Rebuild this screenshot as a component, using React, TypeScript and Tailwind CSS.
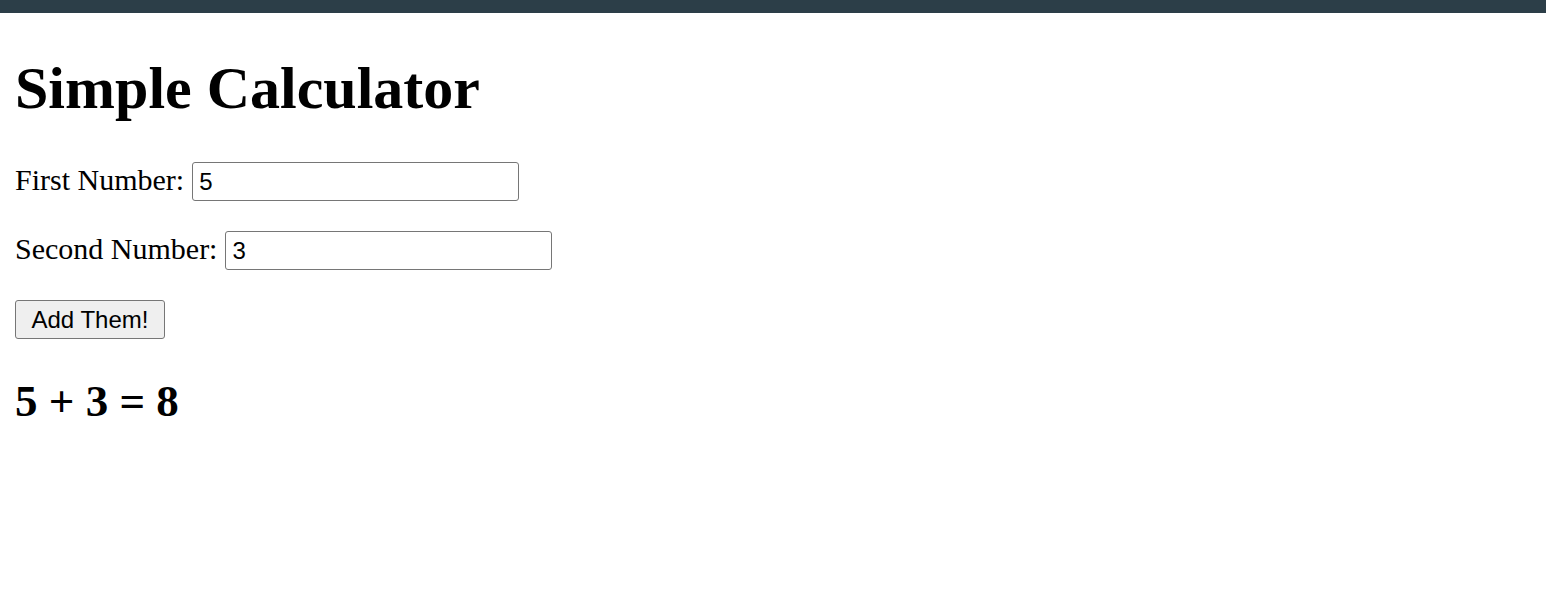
import React, { useState } from "react";

const App: React.FC = () => {
  const [first, setFirst] = useState("5");
  const [second, setSecond] = useState("3");
  const [result, setResult] = useState<number | null>(8);

  const handleAdd = () => {
    setResult((parseFloat(first) || 0) + (parseFloat(second) || 0));
  };

  return (
    <div className="min-h-screen bg-white text-black font-['Liberation_Serif',serif]">
      <div className="h-[13px] bg-[#2c3e48]" />
      <div className="px-[15px]">
        <h1 className="mt-[41px] text-[60px] font-bold leading-[69px]">
          Simple Calculator
        </h1>

        <div className="mt-[39px] flex items-center h-[39px]">
          <label htmlFor="first" className="text-[30px] leading-[34px] mr-[8px] pb-[4px]">
            First Number:
          </label>
          <input
            id="first"
            type="text"
            value={first}
            onChange={(e) => setFirst(e.target.value)}
            className="w-[327px] h-[39px] border border-[#767676] rounded-[3px] px-[6px] text-[24px] font-['Liberation_Sans',Arial,sans-serif] outline-none"
          />
        </div>

        <div className="mt-[30px] flex items-center h-[39px]">
          <label htmlFor="second" className="text-[30px] leading-[34px] mr-[8px] pb-[4px]">
            Second Number:
          </label>
          <input
            id="second"
            type="text"
            value={second}
            onChange={(e) => setSecond(e.target.value)}
            className="w-[327px] h-[39px] border border-[#767676] rounded-[3px] px-[6px] text-[24px] font-['Liberation_Sans',Arial,sans-serif] outline-none"
          />
        </div>

        <div className="mt-[30px]">
          <button
            onClick={handleAdd}
            className="w-[150px] h-[39px] bg-[#efefef] border border-[#767676] rounded-[3px] text-[24px] leading-none font-['Liberation_Sans',Arial,sans-serif]"
          >
            Add Them!
          </button>
        </div>

        {result !== null && (
          <h2 className="mt-[36px] text-[45px] font-bold leading-[52px]">
            {first} + {second} = {result}
          </h2>
        )}
      </div>
    </div>
  );
};

export default App;
